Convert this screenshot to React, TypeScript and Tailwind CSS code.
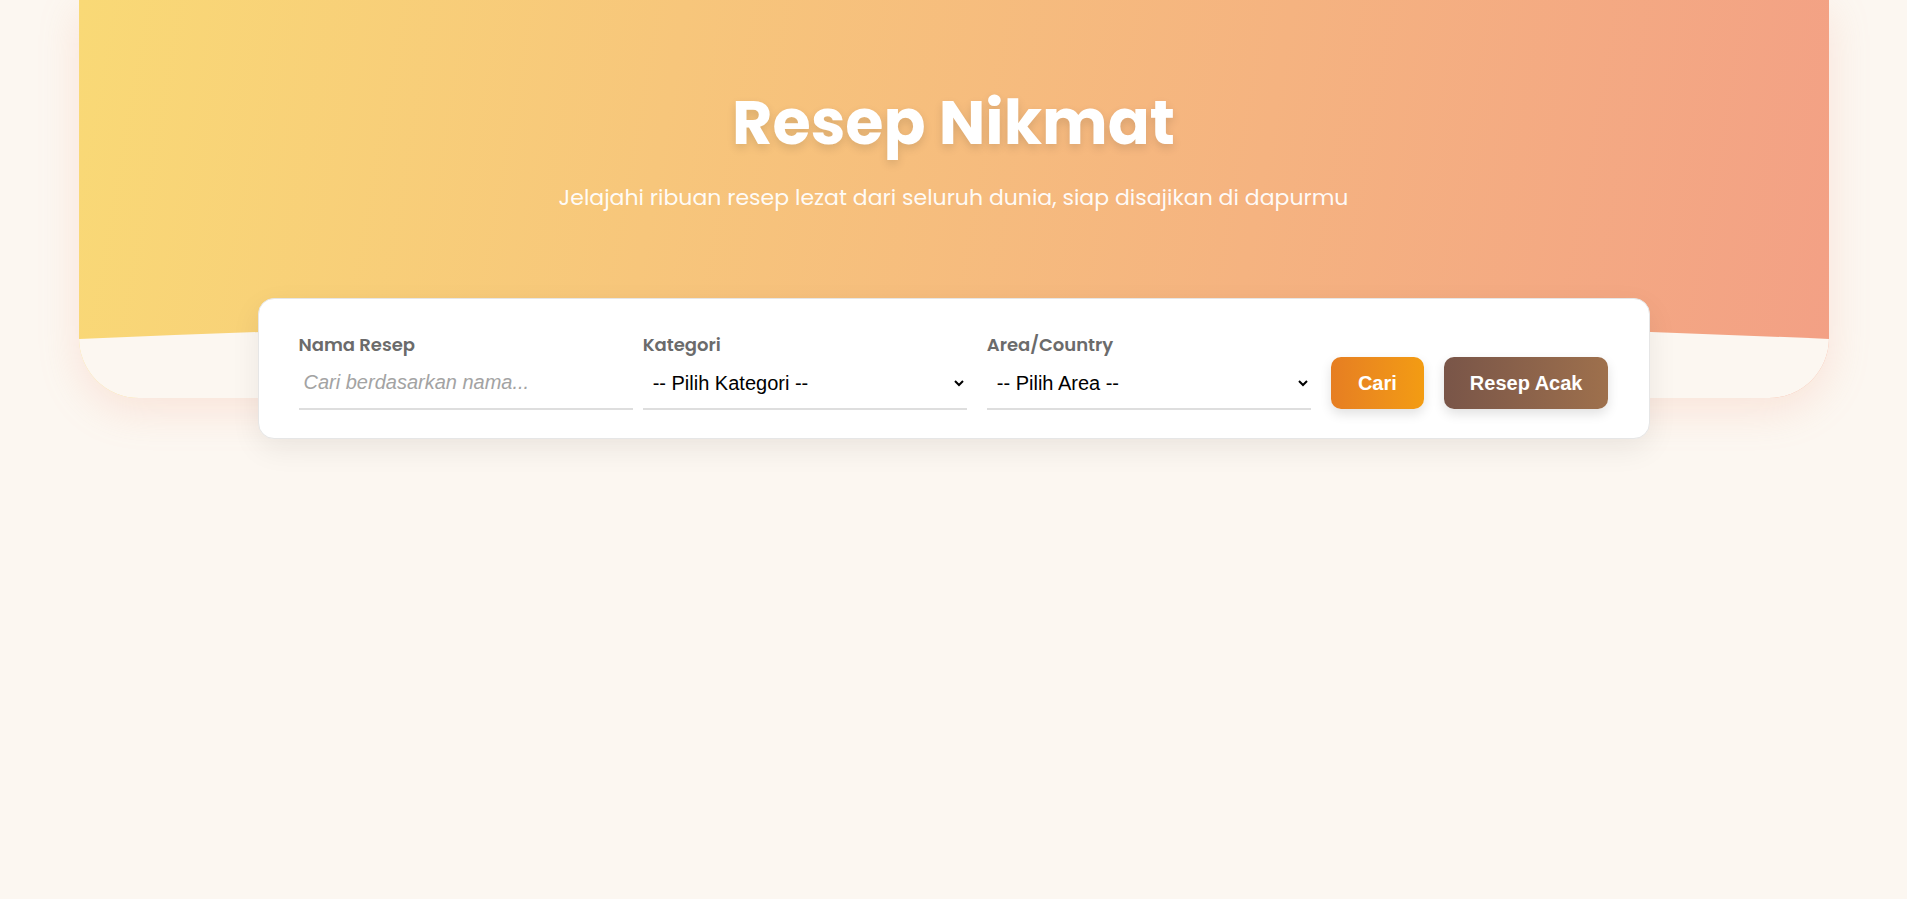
import React from 'react';

const sans = "font-['Liberation_Sans',Arial,sans-serif]";
const head = "font-['Poppins','DejaVu_Sans',sans-serif]";

export default function App() {
  return (
    <div className="min-h-screen bg-[#fcf7f1] pb-10">
      {/* Hero */}
      <header className="relative mx-auto h-[398px] w-[1750px] overflow-hidden rounded-b-[60px] bg-linear-[100deg] from-[#f9d976] to-[#f3a085] shadow-[0_12px_40px_rgba(243,160,133,0.22)]">
        <div className="flex flex-col items-center pt-[86px] text-white">
          <h1 className={`${head} text-[62px] leading-[74px] font-bold [text-shadow:0_4px_10px_rgba(0,0,0,0.12)]`}>
            Resep Nikmat
          </h1>
          <p className={`${head} mt-[22px] text-[22px] leading-[32px] text-white/95`}>
            Jelajahi ribuan resep lezat dari seluruh dunia, siap disajikan di dapurmu
          </p>
        </div>
        <svg
          className="absolute bottom-0 left-0 h-[80px] w-full"
          viewBox="0 0 1750 80"
          preserveAspectRatio="none"
        >
          <path d="M0,21 Q875,-17 1750,21 L1750,80 L0,80 Z" fill="#fcf7f1" />
        </svg>
      </header>

      {/* Search card */}
      <div className="relative z-10 mx-auto -mt-[100px] w-[1392px] rounded-2xl border border-[#e6e6e6] bg-white px-[40px] pt-[33px] pb-[28px] shadow-[0_10px_30px_rgba(0,0,0,0.07)]">
        <div className="flex items-end gap-5">
          <div className="flex-1">
            <label className={`${head} block text-[18px] leading-[25px] font-semibold text-[#6b6b6b]`}>
              Nama Resep
            </label>
            <input
              type="text"
              placeholder="Cari berdasarkan nama..."
              className={`${sans} h-[53px] w-[calc(100%+10px)] border-b-2 border-[#dedede] px-[5px] text-[20px] outline-none placeholder:text-[#a3a3a3] placeholder:italic`}
            />
          </div>
          <div className="flex-1">
            <label className={`${head} block text-[18px] leading-[25px] font-semibold text-[#6b6b6b]`}>
              Kategori
            </label>
            <select
              className={`${sans} h-[53px] w-full border-b-2 border-[#dedede] pr-[10px] pl-[6px] text-[20px] text-black outline-none`}
              defaultValue=""
            >
              <option value="">-- Pilih Kategori --</option>
            </select>
          </div>
          <div className="flex-1">
            <label className={`${head} block text-[18px] leading-[25px] font-semibold text-[#6b6b6b]`}>
              Area/Country
            </label>
            <select
              className={`${sans} h-[53px] w-full border-b-2 border-[#dedede] pr-[10px] pl-[6px] text-[20px] text-black outline-none`}
              defaultValue=""
            >
              <option value="">-- Pilih Area --</option>
            </select>
          </div>
          <button
            className={`${sans} mb-px h-[52px] rounded-[10px] bg-linear-to-r from-[#e67e22] to-[#f39c12] px-[27px] text-[20px] font-bold text-white shadow-[0_5px_12px_rgba(0,0,0,0.12)]`}
          >
            Cari
          </button>
          <button
            className={`${sans} mb-px h-[52px] rounded-[10px] bg-linear-to-r from-[#795548] to-[#9e704c] px-[26px] text-[20px] font-bold text-white shadow-[0_5px_12px_rgba(0,0,0,0.12)]`}
          >
            Resep Acak
          </button>
        </div>
      </div>
    </div>
  );
}
